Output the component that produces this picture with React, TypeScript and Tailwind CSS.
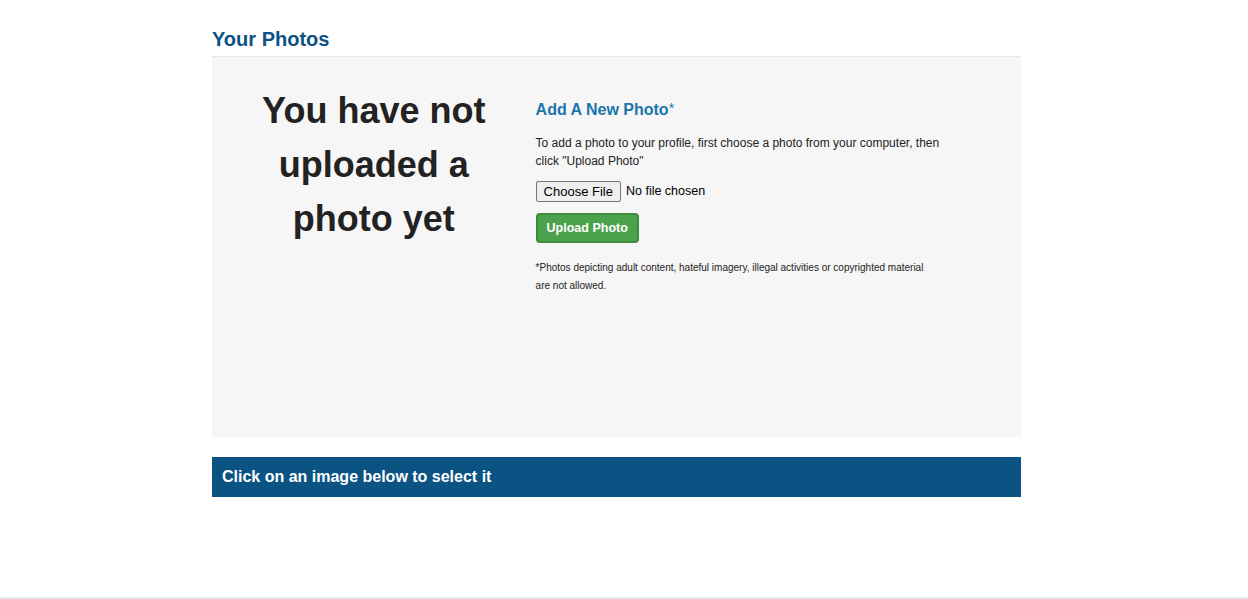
import React from "react";

const font = { fontFamily: '"Liberation Sans", Arial, sans-serif' };

export default function App() {
  return (
    <div className="min-h-[599px] bg-white flex flex-col" style={font}>
      <div className="w-[809px] ml-[212px] pt-[26px] flex-1">
        <h2 className="text-[20px] leading-[26px] font-bold text-[#0b5282] pb-[4px] border-b border-[#e6e6e6]">
          Your Photos
        </h2>

        <div className="bg-[#f6f6f6] h-[380px] flex">
          <div className="w-[40%] pt-[27px] text-center">
            <p className="text-[36px] leading-[54px] font-bold text-[#222] px-[40px]">
              You have not uploaded a photo yet
            </p>
          </div>

          <div className="w-[60%] pt-[41px]">
            <h3 className="text-[16px] leading-[24px] font-bold text-[#1a75ab]">
              Add A New Photo<span className="font-normal text-[14px] align-top leading-[20px]">*</span>
            </h3>
            <p className="mt-[12px] w-[410px] text-[12px] leading-[18px] text-[#222]">
              To add a photo to your profile, first choose a photo from your computer, then click "Upload Photo"
            </p>
            <div className="mt-[11px] flex items-center text-[13px]">
              <label className="px-[7px] h-[21px] leading-[19px] border border-[#767676] rounded-[2px] bg-[#efefef] text-[#000]">
                Choose File
              </label>
              <span className="ml-[5px] text-[12.5px] text-[#000]">No file chosen</span>
            </div>
            <button className="mt-[11px] h-[30px] px-[9px] rounded-[4px] border-2 border-[#3f8a3f] bg-[#4ca24c] text-white text-[12.5px] font-bold">
              Upload Photo
            </button>
            <p className="mt-[16px] w-[395px] text-[10px] leading-[18px] text-[#222]">
              *Photos depicting adult content, hateful imagery, illegal activities or copyrighted material are not allowed.
            </p>
          </div>
        </div>

        <div className="mt-[20px] h-[40px] bg-[#0b5383] flex items-center px-[10px]">
          <span className="text-white font-bold text-[16px]">Click on an image below to select it</span>
        </div>
      </div>
      <div className="h-[2px] bg-[#ebebeb]" />
    </div>
  );
}
